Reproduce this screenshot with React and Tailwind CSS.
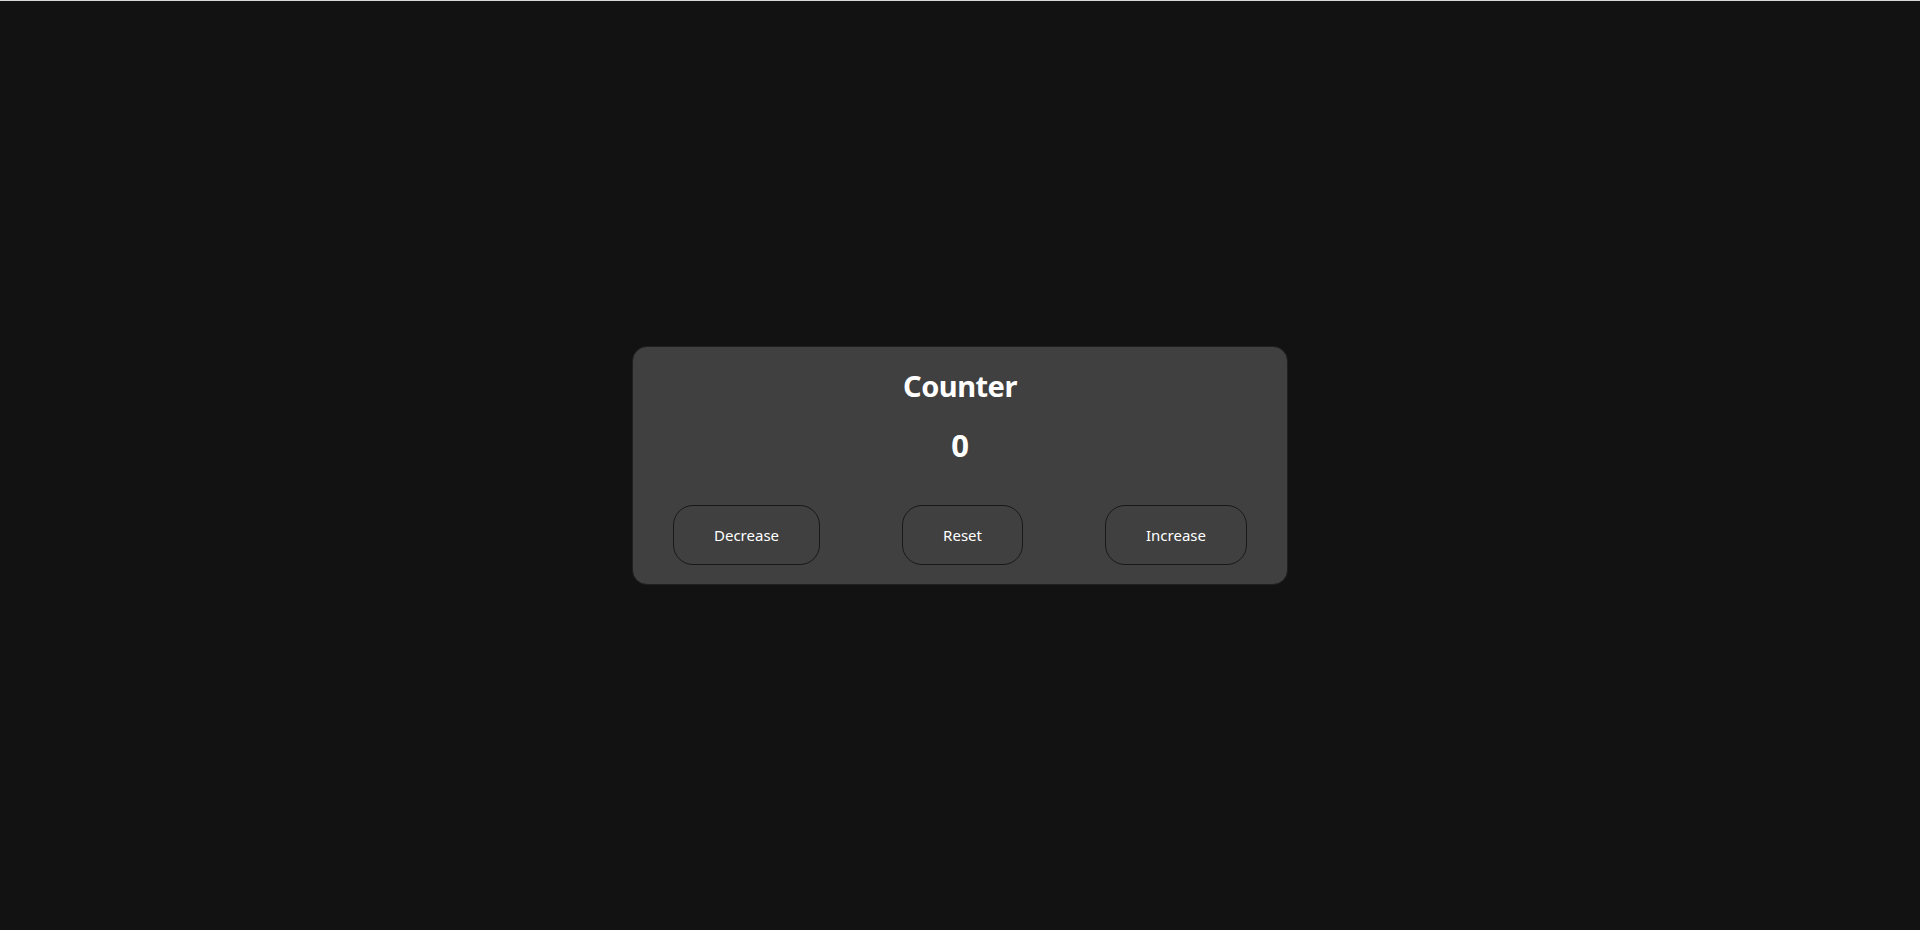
import React, { useState } from "react";

export default function App() {
  const [count, setCount] = useState(0);

  const btn =
    "h-[60px] px-10 rounded-[20px] border border-[#181818] bg-transparent text-white text-[15px] font-normal";

  return (
    <div
      className="min-h-screen h-[930px] bg-[#121212] border-t border-[#d8d8d8] flex items-center justify-center"
      style={{ fontFamily: '"Noto Sans", "Open Sans", sans-serif' }}
    >
      <div className="w-[656px] h-[239px] bg-[#404040] border border-[#1f1f1f] rounded-[15px] px-10 pt-[19px] flex flex-col items-center text-white">
        <h1 className="text-[29px] font-bold leading-[40px] tracking-[-0.5px]">Counter</h1>
        <div className="text-[31px] font-bold leading-[40px] mt-[19px]">{count}</div>

        <div className="w-full flex justify-between mt-[40px]">
          <button className={btn} onClick={() => setCount(count - 1)}>
            Decrease
          </button>
          <button className={btn} onClick={() => setCount(0)}>
            Reset
          </button>
          <button className={btn} onClick={() => setCount(count + 1)}>
            Increase
          </button>
        </div>
      </div>
    </div>
  );
}
